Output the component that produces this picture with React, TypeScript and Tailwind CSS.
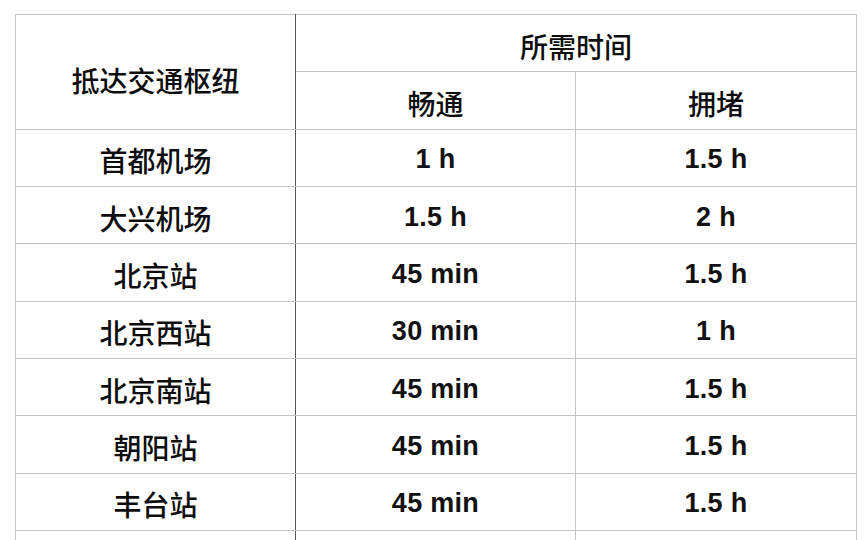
const rows: [string, string, string][] = [
  ['首都机场', '1 h', '1.5 h'],
  ['大兴机场', '1.5 h', '2 h'],
  ['北京站', '45 min', '1.5 h'],
  ['北京西站', '30 min', '1 h'],
  ['北京南站', '45 min', '1.5 h'],
  ['朝阳站', '45 min', '1.5 h'],
  ['丰台站', '45 min', '1.5 h'],
];

const cjk = "font-['Noto_Sans_CJK_SC',sans-serif] text-[28px] font-medium text-[#0d0d0d]";
const num = "font-['Liberation_Sans',Arial,sans-serif] text-[27px] font-bold tracking-[0.3px] text-[#111]";
const cell = 'h-[57.33px] p-0 text-center align-middle border border-[#c4c4c4]';

export default function App() {
  return (
    <div className="h-[540px] w-[865px] overflow-hidden bg-white pl-[15px] pt-[14px]">
      <table className="w-[841px] table-fixed border-collapse">
        <colgroup>
          <col className="w-[280px]" />
          <col className="w-[280px]" />
          <col className="w-[281px]" />
        </colgroup>
        <thead>
          <tr>
            <th rowSpan={2} className={`${cell} border-r-[#555] pt-[16px] leading-none`}>
              <span className={cjk}>抵达交通枢纽</span>
            </th>
            <th colSpan={2} className={`${cell} pt-[6px] leading-none`}>
              <span className={cjk}>所需时间</span>
            </th>
          </tr>
          <tr>
            <th className={`${cell} pt-[6px] leading-none`}>
              <span className={cjk}>畅通</span>
            </th>
            <th className={`${cell} pt-[6px] leading-none`}>
              <span className={cjk}>拥堵</span>
            </th>
          </tr>
        </thead>
        <tbody>
          {rows.map(([hub, free, jam]) => (
            <tr key={hub}>
              <td className={`${cell} border-r-[#555] pt-[5px] leading-none`}>
                <span className={cjk}>{hub}</span>
              </td>
              <td className={`${cell} pt-[4px] leading-none`}>
                <span className={num}>{free}</span>
              </td>
              <td className={`${cell} pt-[4px] leading-none`}>
                <span className={num}>{jam}</span>
              </td>
            </tr>
          ))}
          <tr>
            <td className={`${cell} border-r-[#555]`} />
            <td className={cell} />
            <td className={cell} />
          </tr>
        </tbody>
      </table>
    </div>
  );
}
